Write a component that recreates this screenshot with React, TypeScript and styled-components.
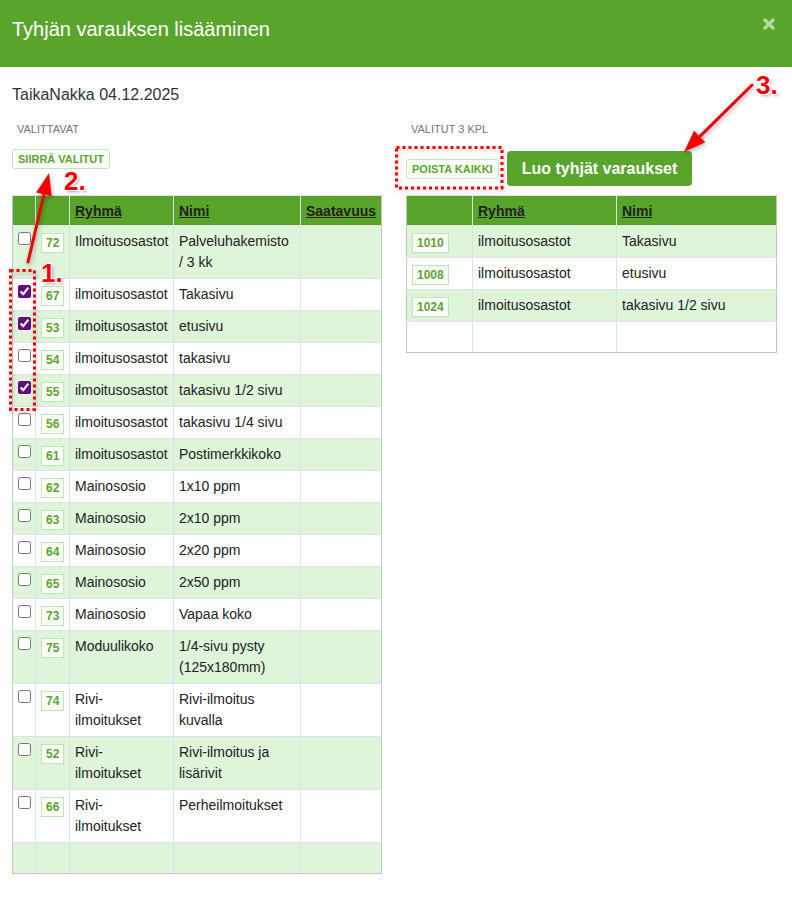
import React from "react";
import styled, { createGlobalStyle } from "styled-components";

const GREEN = "#59a52c";
const ROW_GREEN = "#def5da";
const CELL_BORDER = "#dde3ea";
const OUTER_BORDER = "#c2c4c6";

const GlobalStyle = createGlobalStyle`
  html, body { margin: 0; padding: 0; background: #fff; }
  body { font-family: "Liberation Sans", Arial, sans-serif; color: #222; }
  * { box-sizing: border-box; }
`;

const Page = styled.div`
  position: relative;
  width: 792px;
  min-height: 902px;
  background: #fff;
`;

const Header = styled.header`
  height: 67px;
  background: ${GREEN};
  display: flex;
  justify-content: space-between;
  align-items: flex-start;
  padding: 17px 17px 0 12px;
`;

const Title = styled.h1`
  margin: 0;
  font-size: 20px;
  line-height: 24px;
  font-weight: normal;
  color: #fff;
`;

const CloseButton = styled.button`
  margin-top: 1px;
  padding: 0;
  border: 0;
  background: transparent;
  width: 12px;
  height: 12px;
  display: flex;
  cursor: pointer;
`;

const Body = styled.div`
  padding: 19px 16px 30px 12px;
`;

const Subtitle = styled.div`
  font-size: 16px;
  line-height: 18px;
  color: #333;
`;

const Columns = styled.div`
  margin-top: 18px;
  display: grid;
  grid-template-columns: 369px 370px;
  column-gap: 25px;
  align-items: start;
`;

const Column = styled.section`
  display: flex;
  flex-direction: column;
`;

const Label = styled.div`
  padding-left: 5px;
  font-size: 11px;
  line-height: 14px;
  color: #71757c;
`;

const ButtonRow = styled.div<{ $top: number }>`
  height: 59px;
  padding-top: ${(p) => p.$top}px;
  display: flex;
  align-items: flex-start;
`;

const ActionGroup = styled.div`
  display: flex;
  align-items: center;
  gap: 8px;
`;

const SmallButton = styled.button`
  margin: 0;
  height: 20px;
  padding: 0 5px;
  border: 1px solid #c3e7b6;
  border-radius: 3px;
  background: #fff;
  color: ${GREEN};
  font-family: "Liberation Sans", Arial, sans-serif;
  font-size: 11px;
  font-weight: bold;
  line-height: 18px;
  white-space: nowrap;
  cursor: pointer;
`;

const PrimaryButton = styled.button`
  margin: 0;
  height: 35px;
  padding: 0 15px;
  border: 0;
  border-radius: 4px;
  background: ${GREEN};
  color: #fff;
  font-family: "Liberation Sans", Arial, sans-serif;
  font-size: 16px;
  font-weight: bold;
  line-height: 35px;
  white-space: nowrap;
  cursor: pointer;
`;

const Table = styled.table`
  width: 100%;
  table-layout: fixed;
  border-collapse: collapse;
  font-size: 14px;
  line-height: 21px;
  color: #222;

  th, td {
    border: 1px solid ${CELL_BORDER};
    vertical-align: top;
    text-align: left;
  }
  th { padding: 5px 5px 4px; line-height: 20px; }
  td { padding: 5px 5px 5px; }
  tr > *:first-child { border-left-color: ${OUTER_BORDER}; }
  tr > *:last-child { border-right-color: ${OUTER_BORDER}; }
  tbody tr:last-child td { border-bottom-color: ${OUTER_BORDER}; }
`;

const HeadCell = styled.th`
  background: ${GREEN};
  font-weight: bold;
  color: #222;
  text-decoration: underline;
`;

const Row = styled.tr<{ $shade: boolean }>`
  background: ${(p) => (p.$shade ? ROW_GREEN : "#fff")};
`;

const EmptyCell = styled.td`
  height: 31px;
`;

const Check = styled.input`
  display: block;
  margin: 1px 0 0;
  width: 13px;
  height: 13px;
  accent-color: #650a7f;
`;

const Badge = styled.span`
  display: inline-block;
  vertical-align: top;
  margin: 2px 0 -1px;
  padding: 1px 4px;
  border: 1px solid #bfe7b3;
  background: #fff;
  color: ${GREEN};
  font-size: 12px;
  font-weight: bold;
  line-height: 16px;
`;

const AnnotationLayer = styled.svg`
  position: absolute;
  left: 0;
  top: 0;
  width: 792px;
  height: 902px;
  pointer-events: none;
  overflow: visible;
  filter: drop-shadow(1px 2px 2px rgba(0, 0, 0, 0.3));
`;

const StepNumber = styled.span<{ $x: number; $y: number }>`
  position: absolute;
  left: ${(p) => p.$x}px;
  top: ${(p) => p.$y}px;
  font-family: "Liberation Sans", Arial, sans-serif;
  font-size: 26px;
  line-height: 26px;
  font-weight: bold;
  color: #f50000;
  pointer-events: none;
  text-shadow: -1px -1px 0 #fff, 1px -1px 0 #fff, -1px 1px 0 #fff, 1px 1px 0 #fff,
    2px 2px 3px rgba(0, 0, 0, 0.35);
`;

type Item = { id: number; group: string; name: string; checked?: boolean };

const available: Item[] = [
  { id: 72, group: "Ilmoitusosastot", name: "Palveluhakemisto / 3 kk" },
  { id: 67, group: "ilmoitusosastot", name: "Takasivu", checked: true },
  { id: 53, group: "ilmoitusosastot", name: "etusivu", checked: true },
  { id: 54, group: "ilmoitusosastot", name: "takasivu" },
  { id: 55, group: "ilmoitusosastot", name: "takasivu 1/2 sivu", checked: true },
  { id: 56, group: "ilmoitusosastot", name: "takasivu 1/4 sivu" },
  { id: 61, group: "ilmoitusosastot", name: "Postimerkkikoko" },
  { id: 62, group: "Mainososio", name: "1x10 ppm" },
  { id: 63, group: "Mainososio", name: "2x10 ppm" },
  { id: 64, group: "Mainososio", name: "2x20 ppm" },
  { id: 65, group: "Mainososio", name: "2x50 ppm" },
  { id: 73, group: "Mainososio", name: "Vapaa koko" },
  { id: 75, group: "Moduulikoko", name: "1/4-sivu pysty (125x180mm)" },
  { id: 74, group: "Rivi-ilmoitukset", name: "Rivi-ilmoitus kuvalla" },
  { id: 52, group: "Rivi-ilmoitukset", name: "Rivi-ilmoitus ja lisärivit" },
  { id: 66, group: "Rivi-ilmoitukset", name: "Perheilmoitukset" },
];

const selected: Item[] = [
  { id: 1010, group: "ilmoitusosastot", name: "Takasivu" },
  { id: 1008, group: "ilmoitusosastot", name: "etusivu" },
  { id: 1024, group: "ilmoitusosastot", name: "takasivu 1/2 sivu" },
];

function Arrow({ x1, y1, x2, y2 }: { x1: number; y1: number; x2: number; y2: number }) {
  const dx = x1 - x2;
  const dy = y1 - y2;
  const len = Math.hypot(dx, dy);
  const ux = dx / len;
  const uy = dy / len;
  const hl = 22;
  const hw = 8;
  const bx = x2 + ux * hl;
  const by = y2 + uy * hl;
  const px = -uy * hw;
  const py = ux * hw;
  return (
    <g>
      <line x1={x1} y1={y1} x2={bx} y2={by} stroke="#f50000" strokeWidth={3} strokeLinecap="round" />
      <polygon
        points={`${x2},${y2} ${bx + px},${by + py} ${bx - px},${by - py}`}
        fill="#f50000"
      />
    </g>
  );
}

export default function App() {
  return (
    <Page>
      <GlobalStyle />
      <Header>
        <Title>Tyhjän varauksen lisääminen</Title>
        <CloseButton aria-label="Sulje">
          <svg width="12" height="12" viewBox="0 0 12 12">
            <path d="M2 2 L10 10 M10 2 L2 10" stroke="#b3dc9c" strokeWidth="3.2" strokeLinecap="round" />
          </svg>
        </CloseButton>
      </Header>
      <Body>
        <Subtitle>TaikaNakka 04.12.2025</Subtitle>
        <Columns>
          <Column>
            <Label>VALITTAVAT</Label>
            <ButtonRow $top={13}>
              <SmallButton>SIIRRÄ VALITUT</SmallButton>
            </ButtonRow>
            <Table>
              <colgroup>
                <col style={{ width: 23 }} />
                <col style={{ width: 34 }} />
                <col style={{ width: 104 }} />
                <col style={{ width: 127 }} />
                <col style={{ width: 81 }} />
              </colgroup>
              <thead>
                <tr>
                  <HeadCell />
                  <HeadCell />
                  <HeadCell>Ryhmä</HeadCell>
                  <HeadCell>Nimi</HeadCell>
                  <HeadCell>Saatavuus</HeadCell>
                </tr>
              </thead>
              <tbody>
                {available.map((it, i) => (
                  <Row key={it.id} $shade={i % 2 === 0}>
                    <td>
                      <Check type="checkbox" defaultChecked={!!it.checked} />
                    </td>
                    <td>
                      <Badge>{it.id}</Badge>
                    </td>
                    <td>{it.group}</td>
                    <td>{it.name}</td>
                    <td />
                  </Row>
                ))}
                <Row $shade={available.length % 2 === 0}>
                  <EmptyCell />
                  <EmptyCell />
                  <EmptyCell />
                  <EmptyCell />
                  <EmptyCell />
                </Row>
              </tbody>
            </Table>
          </Column>
          <Column>
            <Label>VALITUT 3 KPL</Label>
            <ButtonRow $top={15}>
              <ActionGroup>
                <SmallButton>POISTA KAIKKI</SmallButton>
                <PrimaryButton>Luo tyhjät varaukset</PrimaryButton>
              </ActionGroup>
            </ButtonRow>
            <Table>
              <colgroup>
                <col style={{ width: 66 }} />
                <col style={{ width: 144 }} />
                <col style={{ width: 160 }} />
              </colgroup>
              <thead>
                <tr>
                  <HeadCell />
                  <HeadCell>Ryhmä</HeadCell>
                  <HeadCell>Nimi</HeadCell>
                </tr>
              </thead>
              <tbody>
                {selected.map((it, i) => (
                  <Row key={it.id} $shade={i % 2 === 0}>
                    <td>
                      <Badge>{it.id}</Badge>
                    </td>
                    <td>{it.group}</td>
                    <td>{it.name}</td>
                  </Row>
                ))}
                <Row $shade={selected.length % 2 === 0}>
                  <EmptyCell />
                  <EmptyCell />
                  <EmptyCell />
                </Row>
              </tbody>
            </Table>
          </Column>
        </Columns>
      </Body>

      <AnnotationLayer viewBox="0 0 792 902">
        <rect x={10.5} y={270.5} width={24} height={139} fill="none" stroke="#f50000" strokeWidth={3} strokeDasharray="3 3" />
        <rect x={396.5} y={147.5} width={105.5} height={40.5} fill="none" stroke="#f50000" strokeWidth={3} strokeDasharray="3 3" />
        <Arrow x1={28} y1={262} x2={49} y2={173} />
        <Arrow x1={752} y1={85} x2={684} y2={152} />
      </AnnotationLayer>
      <StepNumber $x={41} $y={260}>1.</StepNumber>
      <StepNumber $x={64} $y={168}>2.</StepNumber>
      <StepNumber $x={756} $y={72}>3.</StepNumber>
    </Page>
  );
}
